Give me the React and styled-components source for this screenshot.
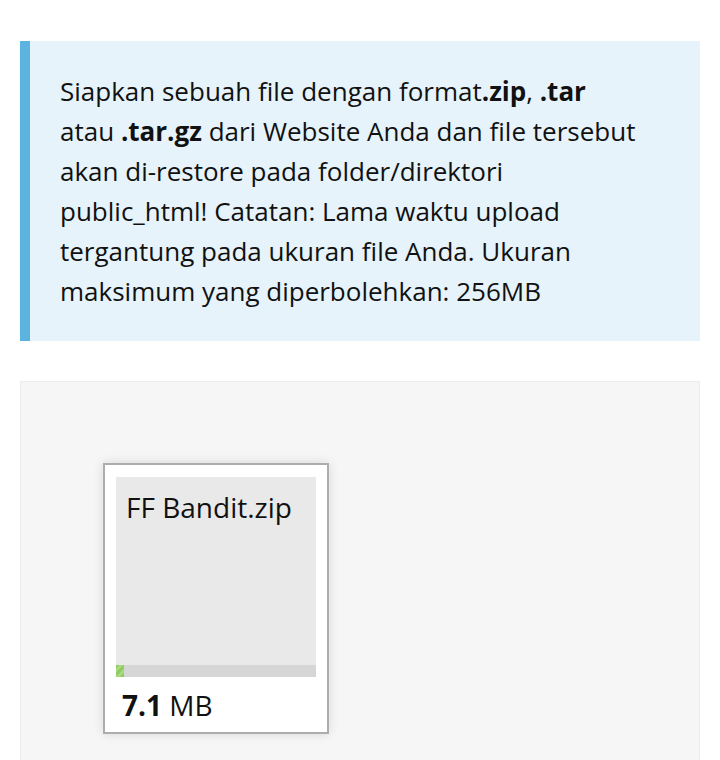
import styled, { createGlobalStyle } from "styled-components";

const Global = createGlobalStyle`
  body {
    margin: 0;
    background: #fff;
    font-family: "Open Sans", "Noto Sans", sans-serif;
    color: #111;
  }
`;

const Page = styled.div`
  padding: 41px 20px 0 20px;
  display: flex;
  flex-direction: column;
  gap: 40px;
`;

const Notice = styled.div`
  background: #e6f3fa;
  border-left: 10px solid #5ab4df;
  padding: 30px 60px 30px 30px;
  font-size: 26px;
  line-height: 40px;

  & b {
    font-weight: 700;
  }
`;

const Dropzone = styled.div`
  background: #f6f6f6;
  border: 1px solid #ececec;
  border-bottom: none;
  padding: 81px 82px 26px 82px;
`;

const Preview = styled.div`
  width: 200px;
  padding: 12px 11px 7px 11px;
  background: #fff;
  border: 2px solid #adadad;
  box-shadow: 0 0 10px rgba(0, 0, 0, 0.12);
`;

const Thumb = styled.div`
  height: 200px;
  background: #e9e9e9;
  display: flex;
  flex-direction: column;
  justify-content: space-between;
`;

const FileName = styled.div`
  padding: 11px 10px 0 10px;
  font-size: 28px;
  line-height: 38px;
`;

const Progress = styled.div`
  height: 12px;
  background: #d6d6d6;
`;

const Fill = styled.div`
  height: 100%;
  background: repeating-linear-gradient(
    -45deg,
    #8fcb5f 0 3px,
    #a9d884 3px 6px
  );
`;

const Size = styled.div`
  padding: 8px 0 0 6px;
  font-size: 28px;
  line-height: 40px;

  & strong {
    font-weight: 700;
  }
`;

export default function App() {
  const progress = 4;
  return (
    <Page>
      <Global />
      <Notice>
        Siapkan sebuah file dengan format<b>.zip</b>, <b>.tar</b> atau{" "}
        <b>.tar.gz</b> dari Website Anda dan file tersebut akan di-restore pada
        folder/direktori public_html! Catatan: Lama waktu upload tergantung pada
        ukuran file Anda. Ukuran maksimum yang diperbolehkan: 256MB
      </Notice>
      <Dropzone>
        <Preview>
          <Thumb>
            <FileName>FF Bandit.zip</FileName>
            <Progress>
              <Fill style={{ width: `${progress}%` }} />
            </Progress>
          </Thumb>
          <Size>
            <strong>7.1</strong> MB
          </Size>
        </Preview>
      </Dropzone>
    </Page>
  );
}
